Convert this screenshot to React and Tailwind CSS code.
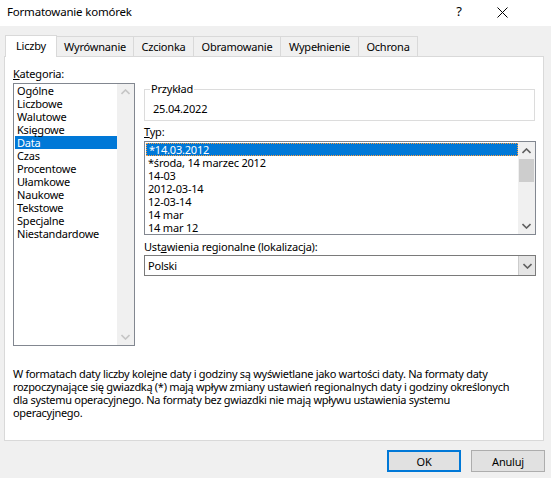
import React from 'react';

const categories = [
  'Ogólne', 'Liczbowe', 'Walutowe', 'Księgowe', 'Data', 'Czas', 'Procentowe',
  'Ułamkowe', 'Naukowe', 'Tekstowe', 'Specjalne', 'Niestandardowe',
];

const types = [
  '*14.03.2012', '*środa, 14 marzec 2012', '14-03', '2012-03-14', '12-03-14', '14 mar', '14 mar 12',
];

const tabs = ['Liczby', 'Wyrównanie', 'Czcionka', 'Obramowanie', 'Wypełnienie', 'Ochrona'];
const tabWidths = [52, 78, 61, 88, 79, 60];

const Chevron = ({ up, color }) => (
  <svg width="9" height="6" viewBox="0 0 9 6">
    <polyline
      points={up ? '0.5,5 4.5,1 8.5,5' : '0.5,1 4.5,5 8.5,1'}
      fill="none"
      stroke={color}
      strokeWidth="1.6"
    />
  </svg>
);

const FormatCells = () => {
  return (
    <div
      className="w-[551px] h-[478px] bg-[#f0f0f0] text-[11px] tracking-[-0.2px] text-black overflow-hidden"
      style={{ fontFamily: '"Noto Sans", "Open Sans", sans-serif' }}
    >
      {/* Title bar */}
      <div className="h-[26px] bg-white flex items-center pl-[7px] pr-[39px] pb-[2px]">
        <span className="flex-1 text-[11.5px]">Formatowanie komórek</span>
        <span className="w-[20px] text-center text-[13px]">?</span>
        <span className="ml-[23px] w-[20px] flex justify-center">
          <svg width="11" height="11" viewBox="0 0 11 11">
            <path d="M0.5 0.5 L10.5 10.5 M10.5 0.5 L0.5 10.5" stroke="#000" strokeWidth="1" />
          </svg>
        </span>
      </div>

      {/* Tabs */}
      <div className="mt-[8px] pl-[5px] flex items-end h-[22px]">
        {tabs.map((t, i) =>
          i === 0 ? (
            <div
              key={t}
              className="relative z-10 h-[22px] -mb-px bg-white border border-b-0 border-[#d9d9d9] flex items-center justify-center leading-none pb-[2px]"
              style={{ width: tabWidths[i] }}
            >
              {t}
            </div>
          ) : (
            <div
              key={t}
              className="h-[20px] -ml-px border border-b-0 border-[#d9d9d9] flex items-center justify-center leading-none"
              style={{ width: tabWidths[i] }}
            >
              {t}
            </div>
          )
        )}
      </div>

      {/* Panel */}
      <div className="ml-[4px] w-[540px] h-[385px] bg-white border border-[#d9d9d9] pl-[8px] pt-[10px]">
        <div className="flex items-start">
          {/* Left column */}
          <div className="w-[122px]">
            <div className="h-[13px] leading-[13px]">
              <span className="underline">K</span>ategoria:
            </div>
            <div className="mt-[3px] h-[263px] border border-[#828790] flex">
              <div className="flex-1 pl-px">
                {categories.map((c) => (
                  <div
                    key={c}
                    className={`h-[13px] leading-[13px] pl-[2px] ${c === 'Data' ? 'bg-[#0078d7] text-white' : ''}`}
                  >
                    {c}
                  </div>
                ))}
              </div>
              <div className="w-[17px] bg-[#f0f0f0] flex flex-col justify-between items-center py-[5px]">
                <Chevron up color="#c5c5c5" />
                <Chevron color="#c5c5c5" />
              </div>
            </div>
          </div>

          {/* Right column */}
          <div className="ml-[9px] w-[392px] mt-[22px]">
            <div className="relative h-[32px] w-[391px] border border-[#dcdcdc]">
              <span className="absolute -top-[8px] left-[5px] bg-white px-px leading-[13px]">Przykład</span>
              <div className="pl-[8px] pt-[12px] leading-[13px]">25.04.2022</div>
            </div>

            <div className="mt-[4px] h-[13px] leading-[13px]">
              <span className="underline">T</span>yp:
            </div>
            <div className="mt-[3px] h-[94px] border border-[#828790] flex">
              <div className="flex-1 pt-px pl-px">
                {types.map((t, i) => (
                  <div
                    key={t}
                    className={`h-[13px] pl-[2px] ${
                      i === 0
                        ? 'leading-[11px] bg-[#0078d7] text-white border border-dotted border-[#ff9d3c]'
                        : 'leading-[13px]'
                    }`}
                  >
                    {t}
                  </div>
                ))}
              </div>
              <div className="w-[17px] bg-[#f0f0f0] flex flex-col items-center">
                <div className="h-[17px] flex items-center justify-center">
                  <Chevron up color="#606060" />
                </div>
                <div className="w-[15px] h-[23px] bg-[#cdcdcd]" />
                <div className="flex-1" />
                <div className="h-[17px] flex items-center justify-center">
                  <Chevron color="#606060" />
                </div>
              </div>
            </div>

            <div className="mt-[5px] h-[13px] leading-[13px]">
              Ust<span className="underline">a</span>wienia regionalne (lokalizacja):
            </div>
            <div className="mt-[2px] h-[21px] border border-[#7a7a7a] flex">
              <div className="flex-1 pl-[3px] flex items-center leading-none">Polski</div>
              <div className="w-[17px] bg-[#e5e5e5] border-l border-[#cccccc] flex items-center justify-center">
                <Chevron color="#606060" />
              </div>
            </div>
          </div>
        </div>

        <p className="mt-[21px] leading-[13px] tracking-[-0.3px] whitespace-nowrap">
          W formatach daty liczby kolejne daty i godziny są wyświetlane jako wartości daty. Na formaty daty
          <br />
          rozpoczynające się gwiazdką (*) mają wpływ zmiany ustawień regionalnych daty i godziny określonych
          <br />
          dla systemu operacyjnego. Na formaty bez gwiazdki nie mają wpływu ustawienia systemu
          <br />
          operacyjnego.
        </p>
      </div>

      {/* Buttons */}
      <div className="mt-[9px] flex justify-end gap-[10px] pr-[6px]">
        <button className="w-[74px] h-[22px] bg-[#e1e1e1] border-2 border-[#0078d7] leading-none">OK</button>
        <button className="w-[74px] h-[22px] bg-[#e1e1e1] border border-[#adadad] leading-none">Anuluj</button>
      </div>
    </div>
  );
};

export default function App() {
  return <FormatCells />;
}
